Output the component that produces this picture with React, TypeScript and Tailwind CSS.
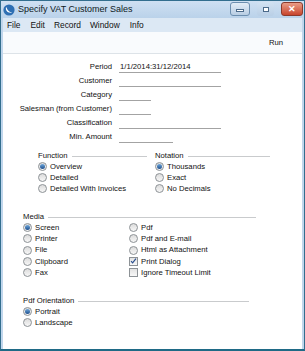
import React from "react";

const font = { fontFamily: '"Liberation Sans", Arial, sans-serif' };

function Radio({ on }: { on?: boolean }) {
  return (
    <span className="w-[9px] h-[9px] rounded-full border border-[#8d9296] bg-gradient-to-b from-[#dcdcdc] to-[#f7f7f7] flex items-center justify-center shrink-0">
      {on && <span className="w-[5px] h-[5px] rounded-full bg-gradient-to-b from-[#6fa8dc] to-[#1e4f8c]" />}
    </span>
  );
}

function Check({ on }: { on?: boolean }) {
  return (
    <span className="w-[9px] h-[9px] border border-[#8d9296] bg-gradient-to-b from-[#e2e2e2] to-[#f8f8f8] flex items-center justify-center shrink-0">
      {on && (
        <svg width="8" height="8" viewBox="0 0 8 8">
          <path d="M1.2 4.2 L3 6.2 L6.8 1.2" stroke="#2a4f8f" strokeWidth="1.3" fill="none" />
        </svg>
      )}
    </span>
  );
}

function Opt({ kind = "radio", on, label }: { kind?: "radio" | "check"; on?: boolean; label: string }) {
  return (
    <div className="h-[11px] flex items-center gap-[3px]">
      {kind === "radio" ? <Radio on={on} /> : <Check on={on} />}
      <span className="leading-none">{label}</span>
    </div>
  );
}

function Heading({ label, lineW }: { label: string; lineW: number }) {
  return (
    <div className="h-[11px] flex items-center gap-[4px]">
      <span className="leading-none">{label}</span>
      <span className="h-px bg-[#c9cbcd] mt-[2px]" style={{ width: lineW }} />
    </div>
  );
}

function Field({ label, w, value }: { label: string; w: number; value?: string }) {
  return (
    <div className="h-[14px] flex items-center">
      <div className="w-[109px] text-right leading-none pr-0">{label}</div>
      <div className="ml-[7px] h-[11px] border-b border-[#a3a3a3] leading-none flex items-end pb-[1px] pl-[1px]" style={{ width: w }}>
        {value}
      </div>
    </div>
  );
}

export default function App() {
  return (
    <div className="w-[305px] h-[351px] bg-[#c0d6ec] border border-[#336e8e] border-b-2 border-b-[#1f6a86] flex flex-col overflow-hidden text-[#111]" style={font}>
      {/* title bar */}
      <div className="h-[17px] flex items-center bg-gradient-to-b from-[#cfe0f2] to-[#bad2ea] pl-[2px] pr-[1px]">
        <svg width="12" height="12" viewBox="0 0 12 12" className="shrink-0">
          <circle cx="6" cy="6" r="5.6" fill="#2e6fb3" />
          <path d="M3 3.2 C2.2 6.5 5 9.6 9.2 8.4 C6 8 4.2 6 3.6 3.4 Z" fill="#ffffff" />
        </svg>
        <span className="ml-[3px] text-[9px] leading-none text-[#0f1a24]">Specify VAT Customer Sales</span>
        <div className="ml-auto flex items-start gap-[7px] self-start mt-[1px]">
          <div className="w-[20px] h-[14px] rounded-[3px] border border-[#6d8fb0] bg-gradient-to-b from-[#e3edf7] to-[#b8cde3] flex items-center justify-center">
            <span className="w-[8px] h-[3px] bg-white border border-[#4b6a8a] mt-[3px]" />
          </div>
          <div className="w-[17px] h-[14px] rounded-[3px] bg-gradient-to-b from-[#d2e2f2] to-[#b9cfe6] flex items-center justify-center">
            <span className="w-[6px] h-[5px] border border-[#4b6a8a] bg-white" />
          </div>
          <div className="w-[22px] h-[14px] rounded-[3px] border border-[#8c3a2c] bg-gradient-to-b from-[#e99c86] to-[#c7432c] flex items-center justify-center">
            <span className="text-white text-[9px] font-bold leading-none">✕</span>
          </div>
        </div>
      </div>
      {/* menu */}
      <div className="h-[14px] mx-[2px] bg-[#dce8f4] flex items-center text-[8.4px] leading-none">
        <span className="ml-[4px]">File</span>
        <span className="ml-[10px]">Edit</span>
        <span className="ml-[9px]">Record</span>
        <span className="ml-[9px]">Window</span>
        <span className="ml-[10px]">Info</span>
      </div>
      {/* content */}
      <div className="flex-1 mx-[2px] bg-white flex flex-col text-[7.7px]">
        <div className="h-[22px] bg-[#f9fbfd] border-b border-[#dde3e8] flex items-center justify-end pr-[19px] leading-none">
          Run
        </div>
        <div className="pt-[6px]">
          <Field label="Period" w={102} value="1/1/2014:31/12/2014" />
          <Field label="Customer" w={102} />
          <Field label="Category" w={32} />
          <Field label="Salesman (from Customer)" w={32} />
          <Field label="Classification" w={102} />
          <Field label="Min. Amount" w={54} />
        </div>
        <div className="flex mt-[6px]">
          <div className="ml-[35px] w-[117px]">
            <Heading label="Function" lineW={75} />
            <Opt on label="Overview" />
            <Opt label="Detailed" />
            <Opt label="Detailed With Invoices" />
          </div>
          <div>
            <Heading label="Notation" lineW={82} />
            <Opt on label="Thousands" />
            <Opt label="Exact" />
            <Opt label="No Decimals" />
          </div>
        </div>
        <div className="ml-[20px] mt-[17px]">
          <Heading label="Media" lineW={208} />
          <div className="flex">
            <div className="w-[106px] flex flex-col gap-[0.3px]">
              <Opt on label="Screen" />
              <Opt label="Printer" />
              <Opt label="File" />
              <Opt label="Clipboard" />
              <Opt label="Fax" />
            </div>
            <div className="flex flex-col gap-[0.3px]">
              <Opt label="Pdf" />
              <Opt label="Pdf and E-mail" />
              <Opt label="Html as Attachment" />
              <Opt kind="check" on label="Print Dialog" />
              <Opt kind="check" label="Ignore Timeout Limit" />
            </div>
          </div>
        </div>
        <div className="ml-[20px] mt-[17px]">
          <Heading label="Pdf Orientation" lineW={171} />
          <Opt on label="Portrait" />
          <Opt label="Landscape" />
        </div>
      </div>
    </div>
  );
}
